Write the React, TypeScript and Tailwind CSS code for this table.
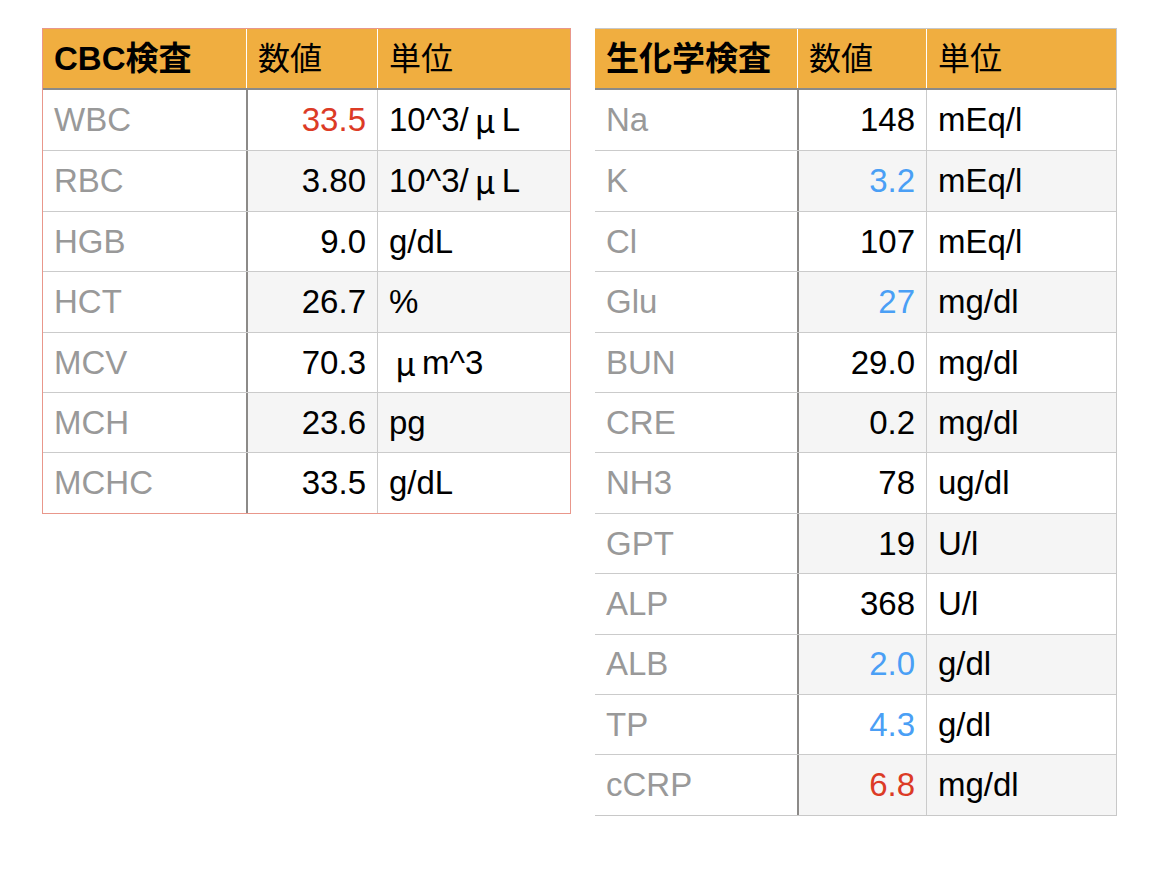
import React from 'react';

type Row = { name: string; value: string; unit: React.ReactNode; color?: 'red' | 'blue' };

// full-width mu like the Japanese system font renders it
const Mu = () => (
  <span className="inline-block w-[1em] text-center" style={{ fontFamily: '"Noto Sans CJK JP", sans-serif' }}>
    μ
  </span>
);

const cbcRows: Row[] = [
  { name: 'WBC', value: '33.5', unit: <>10^3/<Mu />L</>, color: 'red' },
  { name: 'RBC', value: '3.80', unit: <>10^3/<Mu />L</> },
  { name: 'HGB', value: '9.0', unit: 'g/dL' },
  { name: 'HCT', value: '26.7', unit: '%' },
  { name: 'MCV', value: '70.3', unit: <><Mu />m^3</> },
  { name: 'MCH', value: '23.6', unit: 'pg' },
  { name: 'MCHC', value: '33.5', unit: 'g/dL' },
];

const chemRows: Row[] = [
  { name: 'Na', value: '148', unit: 'mEq/l' },
  { name: 'K', value: '3.2', unit: 'mEq/l', color: 'blue' },
  { name: 'Cl', value: '107', unit: 'mEq/l' },
  { name: 'Glu', value: '27', unit: 'mg/dl', color: 'blue' },
  { name: 'BUN', value: '29.0', unit: 'mg/dl' },
  { name: 'CRE', value: '0.2', unit: 'mg/dl' },
  { name: 'NH3', value: '78', unit: 'ug/dl' },
  { name: 'GPT', value: '19', unit: 'U/l' },
  { name: 'ALP', value: '368', unit: 'U/l' },
  { name: 'ALB', value: '2.0', unit: 'g/dl', color: 'blue' },
  { name: 'TP', value: '4.3', unit: 'g/dl', color: 'blue' },
  { name: 'cCRP', value: '6.8', unit: 'mg/dl', color: 'red' },
];

const valueColor = (c?: 'red' | 'blue') =>
  c === 'red' ? 'text-[#dc3b26]' : c === 'blue' ? 'text-[#4a9ff5]' : 'text-black';

const LabTable = ({
  title,
  rows,
  col1,
  col2,
  outer,
}: {
  title: string;
  rows: Row[];
  col1: string;
  col2: string;
  outer: string;
}) => (
  <div className={outer}>
    {/* header */}
    <div className="flex h-[61px] bg-[#f0ae40] border-b-2 border-[#8a8a8a] text-[32px] text-black">
      <div className={`${col1} flex items-center px-[11px] font-bold text-[33px]`}>{title}</div>
      <div className={`${col2} flex items-center px-[11px] border-l border-white`}>数値</div>
      <div className="flex-1 flex items-center px-[11px] border-l border-white">単位</div>
    </div>
    {rows.map((row, i) => {
      const shade = i % 2 === 1 ? 'bg-[#f5f5f5]' : 'bg-white';
      return (
        <div
          key={row.name}
          className={`flex h-[60.4px] text-[33px] ${i > 0 ? 'border-t border-[#cbcbcb]' : ''}`}
        >
          <div className={`${col1} flex items-center px-[11px] text-[#999999] bg-white`}>{row.name}</div>
          <div
            className={`${col2} flex items-center justify-end px-[11px] border-l-2 border-[#8c8a88] ${shade} ${valueColor(row.color)}`}
          >
            {row.value}
          </div>
          <div className={`flex-1 flex items-center px-[11px] border-l border-[#cbcbcb] text-black ${shade}`}>
            {row.unit}
          </div>
        </div>
      );
    })}
  </div>
);

export default function App() {
  return (
    <div
      className="min-h-[870px] bg-white flex items-start gap-[24px] pl-[42px] pt-[28px]"
      style={{ fontFamily: '"Liberation Sans", "Noto Sans CJK JP", sans-serif' }}
    >
      <LabTable
        title="CBC検査"
        rows={cbcRows}
        col1="w-[203px]"
        col2="w-[131px]"
        outer="w-[529px] border border-[#e9978b]"
      />
      <LabTable
        title="生化学検査"
        rows={chemRows}
        col1="w-[202px]"
        col2="w-[129px]"
        outer="w-[522px] border-t border-r border-b border-[#c8c8c8]"
      />
    </div>
  );
}
